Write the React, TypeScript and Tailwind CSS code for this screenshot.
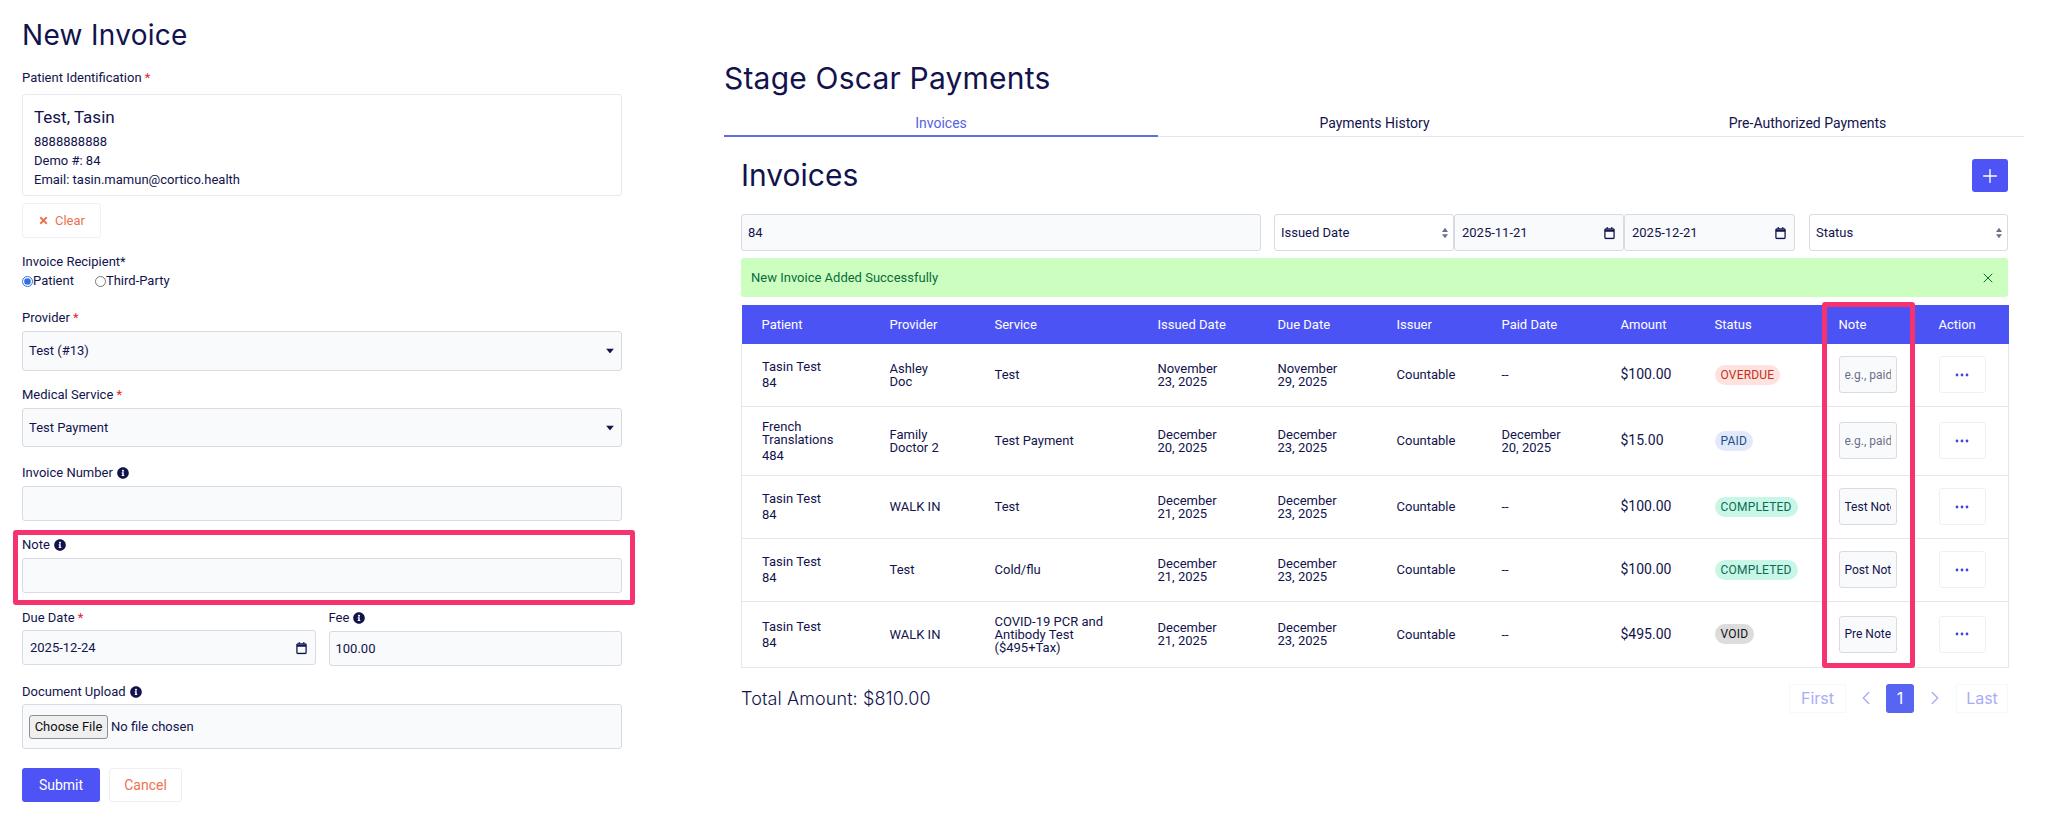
import { FaInfoCircle, FaTimes } from "react-icons/fa";
import { ChevronLeft, ChevronRight, Plus, X } from "lucide-react";

const rows = [
  { patient: "Tasin Test", id: "84", provider: "Ashley\nDoc", service: "Test", issued: "November\n23, 2025", due: "November\n29, 2025", paid: "--", amount: "$100.00", status: "OVERDUE", note: "", h: "h-[62px]" },
  { patient: "French\nTranslations", id: "484", provider: "Family\nDoctor 2", service: "Test Payment", issued: "December\n20, 2025", due: "December\n23, 2025", paid: "December\n20, 2025", amount: "$15.00", status: "PAID", note: "", h: "h-[69px]" },
  { patient: "Tasin Test", id: "84", provider: "WALK IN", service: "Test", issued: "December\n21, 2025", due: "December\n23, 2025", paid: "--", amount: "$100.00", status: "COMPLETED", note: "Test Note", h: "h-[63px]" },
  { patient: "Tasin Test", id: "84", provider: "Test", service: "Cold/flu", issued: "December\n21, 2025", due: "December\n23, 2025", paid: "--", amount: "$100.00", status: "COMPLETED", note: "Post Note", h: "h-[63px]" },
  { patient: "Tasin Test", id: "84", provider: "WALK IN", service: "COVID-19 PCR and\nAntibody Test\n($495+Tax)", issued: "December\n21, 2025", due: "December\n23, 2025", paid: "--", amount: "$495.00", status: "VOID", note: "Pre Note", h: "h-[66px]" },
];

const badgeColors: Record<string, string> = {
  OVERDUE: "bg-[#fde3df] text-[#c8301a]",
  PAID: "bg-[#e1e9fb] text-[#1f4e8c]",
  COMPLETED: "bg-[#c8f7e8] text-[#0c6b55]",
  VOID: "bg-[#dcdcdc] text-[#111111]",
};

const headers = [
  { label: "Patient", w: "w-[128px]" },
  { label: "Provider", w: "w-[105px]" },
  { label: "Service", w: "w-[163px]" },
  { label: "Issued Date", w: "w-[120px]" },
  { label: "Due Date", w: "w-[119px]" },
  { label: "Issuer", w: "w-[105px]" },
  { label: "Paid Date", w: "w-[119px]" },
  { label: "Amount", w: "w-[94px]" },
  { label: "Status", w: "w-[124px]" },
  { label: "Note", w: "w-[100px]" },
  { label: "Action", w: "w-[90px]" },
];

const fieldClass =
  "border border-[#d9dae2] rounded-[3px] bg-[#f9fafc] px-[6px] text-[13px] text-[#12134d] outline-none";

function Label({ text, required, info }: { text: string; required?: boolean; info?: boolean }) {
  return (
    <div className="h-4 flex items-center gap-1 text-[13px] leading-4 text-[#12134d]">
      <span>
        {text}
        {required && <span className="text-[#e6232f]"> *</span>}
      </span>
      {info && <FaInfoCircle size={12} className="text-[#12134d]" />}
    </div>
  );
}

function CaretSelect({ value, className }: { value: string; className: string }) {
  return (
    <div className={`relative ${className}`}>
      <select className={`${fieldClass} w-full h-full appearance-none`} defaultValue={value}>
        <option>{value}</option>
      </select>
      <svg viewBox="0 0 10 6" className="absolute right-[8px] top-1/2 -translate-y-1/2 w-[8px] h-[5px] fill-[#12134d]">
        <path d="M0 0h10L5 6z" />
      </svg>
    </div>
  );
}

function SortSelect({ value, className }: { value: string; className: string }) {
  return (
    <div className={`relative ${className}`}>
      <select
        className="w-full h-full appearance-none border border-[#d9dae2] rounded-[3px] bg-white px-[6px] text-[13px] text-[#12134d] outline-none"
        defaultValue={value}
      >
        <option>{value}</option>
      </select>
      <svg viewBox="0 0 8 14" className="absolute right-[6px] top-1/2 -translate-y-1/2 w-[6px] h-[11px] fill-[#6d6f8a]">
        <path d="M4 0l4 5.5H0zM4 14L0 8.5h8z" />
      </svg>
    </div>
  );
}

// the picture shows yyyy-mm-dd, which the native date input won't give here
function DateField({ value, className }: { value: string; className: string }) {
  return (
    <div className={`relative ${className}`}>
      <input defaultValue={value} className={`${fieldClass} w-full h-full px-[7px]`} />
      <svg viewBox="0 0 12 14" className="absolute right-[9px] top-1/2 -translate-y-1/2 w-[11px] h-[13px] fill-none stroke-[#12134d]">
        <rect x="1" y="2.5" width="10" height="10.5" rx="1" strokeWidth="1.4" />
        <path d="M1 4.5h10" strokeWidth="2.4" />
        <path d="M3.5 0.5v2M8.5 0.5v2" strokeWidth="1.2" />
      </svg>
    </div>
  );
}

export default function App() {
  return (
    <main className="w-[2048px] h-[826px] overflow-hidden bg-white flex text-[#12134d] font-['Roboto',sans-serif]">
      {/* New invoice form */}
      <section className="w-[600px] ml-[22px] shrink-0">
        <h1 className="mt-[18px] h-[34px] leading-[34px] text-[28px] tracking-[0.3px] font-['Inter',sans-serif]">New Invoice</h1>

        <div className="mt-[18px]">
          <Label text="Patient Identification" required />
        </div>
        <div className="mt-2 h-[102px] border border-[#e8e9ee] rounded-[3px] px-[11px] pt-[12px] text-[13px] leading-[19px]">
          <div className="text-[17px] leading-5 mb-[5px]">Test, Tasin</div>
          <div>8888888888</div>
          <div>Demo #: 84</div>
          <div>Email: tasin.mamun@cortico.health</div>
        </div>
        <button className="mt-[7px] w-[79px] h-[35px] border border-[#f0f0f3] rounded-[3px] flex items-center justify-center gap-[6px] text-[13px] text-[#f0714f]">
          <FaTimes size={11} /> Clear
        </button>

        <div className="mt-4">
          <Label text="Invoice Recipient*" />
        </div>
        <div className="mt-[3px] h-4 flex items-center text-[13px]">
          <input type="radio" name="recipient" defaultChecked className="w-[11px] h-[11px] m-0 accent-[#2f6fe0]" />
          <span>Patient</span>
          <input type="radio" name="recipient" className="w-[11px] h-[11px] m-0 ml-[21px]" />
          <span>Third-Party</span>
        </div>

        <div className="mt-[21px]">
          <Label text="Provider" required />
        </div>
        <CaretSelect value="Test (#13)" className="mt-[5px] h-10" />

        <div className="mt-4">
          <Label text="Medical Service" required />
        </div>
        <CaretSelect value="Test Payment" className="mt-[5px] h-[39px]" />

        <div className="mt-[18px]">
          <Label text="Invoice Number" info />
        </div>
        <input className={`${fieldClass} w-full mt-[5px] h-[35px] block`} />

        <div className="relative mt-4">
          <Label text="Note" info />
          <input className={`${fieldClass} w-full mt-[5px] h-[35px] block`} />
          <div className="absolute -left-[9px] -right-[13px] -top-[7px] -bottom-[12px] border-[5px] border-[#f7336f] rounded-[3px] pointer-events-none" />
        </div>

        <div className="mt-[17px] grid grid-cols-2 gap-[13px]">
          <div>
            <Label text="Due Date" required />
            <DateField value="2025-12-24" className="mt-1 h-[35px]" />
          </div>
          <div>
            <Label text="Fee" info />
            <input defaultValue="100.00" className={`${fieldClass} w-full mt-[5px] h-[35px] block`} />
          </div>
        </div>

        <div className="mt-[18px]">
          <Label text="Document Upload" info />
        </div>
        <div className="mt-1 h-[45px] border border-[#d9dae2] rounded-[3px] bg-[#f9fafc] flex items-center px-[6px]">
          <input
            type="file"
            className="text-[13px] w-full file:mr-[3px] file:h-[24px] file:w-[79px] file:border file:border-[#8f8f8f] file:rounded-[3px] file:bg-[#efefef] file:text-[13px] file:text-[#111111]"
          />
        </div>

        <div className="mt-[19px] flex gap-[9px]">
          <button className="w-[78px] h-[34px] rounded-[3px] bg-[#4d53f5] text-white text-[14px]">Submit</button>
          <button className="w-[73px] h-[34px] border border-[#f0f0f3] rounded-[3px] text-[#f0714f] text-[14px]">Cancel</button>
        </div>
      </section>

      {/* Payments */}
      <section className="ml-[102px] w-[1300px] shrink-0">
        <h1 className="mt-[60px] h-9 leading-9 text-[30px] tracking-[0.2px] font-['Inter',sans-serif]">Stage Oscar Payments</h1>

        <div className="mt-[11px] flex border-b border-[#e4e5ea] h-[30px] text-[14px]">
          <div className="w-[434px] h-[30px] border-b-2 border-[#5f6fe0] text-center text-[#5563e6] leading-[32px]">Invoices</div>
          <div className="w-[433px] text-center leading-[32px]">Payments History</div>
          <div className="w-[433px] text-center leading-[32px]">Pre-Authorized Payments</div>
        </div>

        <div className="ml-[17px] w-[1267px]">
          <div className="mt-[22px] h-[33px] flex items-center justify-between">
            <h2 className="text-[30px] leading-[33px] font-['Inter',sans-serif]">Invoices</h2>
            <button className="w-9 h-[33px] rounded-[3px] bg-[#4d53f5] flex items-center justify-center text-white">
              <Plus size={22} strokeWidth={1.5} />
            </button>
          </div>

          <div className="mt-[22px] h-[37px] flex">
            <input defaultValue="84" className={`${fieldClass} w-[520px] h-full`} />
            <SortSelect value="Issued Date" className="ml-[13px] w-[180px] h-full" />
            <DateField value="2025-11-21" className="w-[170px] h-full" />
            <DateField value="2025-12-21" className="w-[171px] h-full" />
            <SortSelect value="Status" className="ml-[14px] flex-1 h-full" />
          </div>

          <div className="mt-[7px] h-[39px] rounded-[3px] bg-[#ccffbf] px-[10px] flex items-center justify-between text-[13px] text-[#0a6b3c]">
            <span>New Invoice Added Successfully</span>
            <X size={16} strokeWidth={1.5} className="mr-[2px]" />
          </div>

          <div className="relative mt-2">
            <table className="w-full table-fixed text-[13px] leading-[13px]">
              <thead>
                <tr className="h-[39px] bg-[#4c53f5] text-white">
                  {headers.map((h) => (
                    <th key={h.label} className={`${h.w} pl-5 text-left font-normal`}>
                      {h.label}
                    </th>
                  ))}
                </tr>
              </thead>
              <tbody>
                {rows.map((r, i) => (
                  <tr key={i} className={`${r.h} border-b border-[#e6e7eb]`}>
                    <td className="pl-5 border-l border-[#e6e7eb]">
                      <div className="whitespace-pre-line">{r.patient}</div>
                      <div className="mt-[3px]">{r.id}</div>
                    </td>
                    <td className="pl-5 whitespace-pre-line">{r.provider}</td>
                    <td className="pl-5 whitespace-pre-line">{r.service}</td>
                    <td className="pl-5 whitespace-pre-line">{r.issued}</td>
                    <td className="pl-5 whitespace-pre-line">{r.due}</td>
                    <td className="pl-5">Countable</td>
                    <td className="pl-5 whitespace-pre-line">{r.paid}</td>
                    <td className="pl-5 text-[14px]">{r.amount}</td>
                    <td className="pl-5">
                      <span className={`inline-block h-5 leading-5 px-[6px] rounded-[10px] text-[12px] tracking-[0.2px] ${badgeColors[r.status]}`}>
                        {r.status}
                      </span>
                    </td>
                    <td className="pl-5">
                      <input
                        defaultValue={r.note}
                        placeholder="e.g., paid"
                        className="block w-[58px] h-[37px] border border-[#d9dae2] rounded-[3px] bg-[#f9fafc] px-[5px] text-[12px] text-[#12134d] placeholder:text-[#6d6f8a] outline-none"
                      />
                    </td>
                    <td className="pl-5 border-r border-[#e6e7eb]">
                      <button className="w-[47px] h-[37px] border border-[#f0f0f3] rounded-[3px] flex items-center justify-center">
                        <svg viewBox="0 0 14 4" className="w-[14px] h-1 fill-[#3f45e8]">
                          <circle cx="2" cy="2" r="1.4" />
                          <circle cx="7" cy="2" r="1.4" />
                          <circle cx="12" cy="2" r="1.4" />
                        </svg>
                      </button>
                    </td>
                  </tr>
                ))}
              </tbody>
            </table>
            <div className="absolute left-[1081px] w-[93px] -top-[3px] bottom-0 border-[5px] border-[#f7336f] rounded-[3px] pointer-events-none" />
          </div>

          <div className="mt-4 flex items-center justify-between h-[29px]">
            <span className="text-[18px] font-light tracking-[0.1px] font-['Inter',sans-serif]">Total Amount: $810.00</span>
            <div className="flex items-center text-[#a9acf5] text-[16px] h-[29px] font-['Inter',sans-serif]">
              <span className="w-[57px] h-[29px] leading-[27px] text-center border border-[#f8f8fa]">First</span>
              <span className="w-10 flex justify-center">
                <ChevronLeft size={22} strokeWidth={1.5} />
              </span>
              <span className="w-7 h-[29px] rounded-[3px] bg-[#5865f2] text-white text-center leading-[29px]">1</span>
              <span className="w-[42px] flex justify-center">
                <ChevronRight size={22} strokeWidth={1.5} />
              </span>
              <span className="w-[52px] h-[29px] leading-[27px] text-center border border-[#f8f8fa]">Last</span>
            </div>
          </div>
        </div>
      </section>
    </main>
  );
}
